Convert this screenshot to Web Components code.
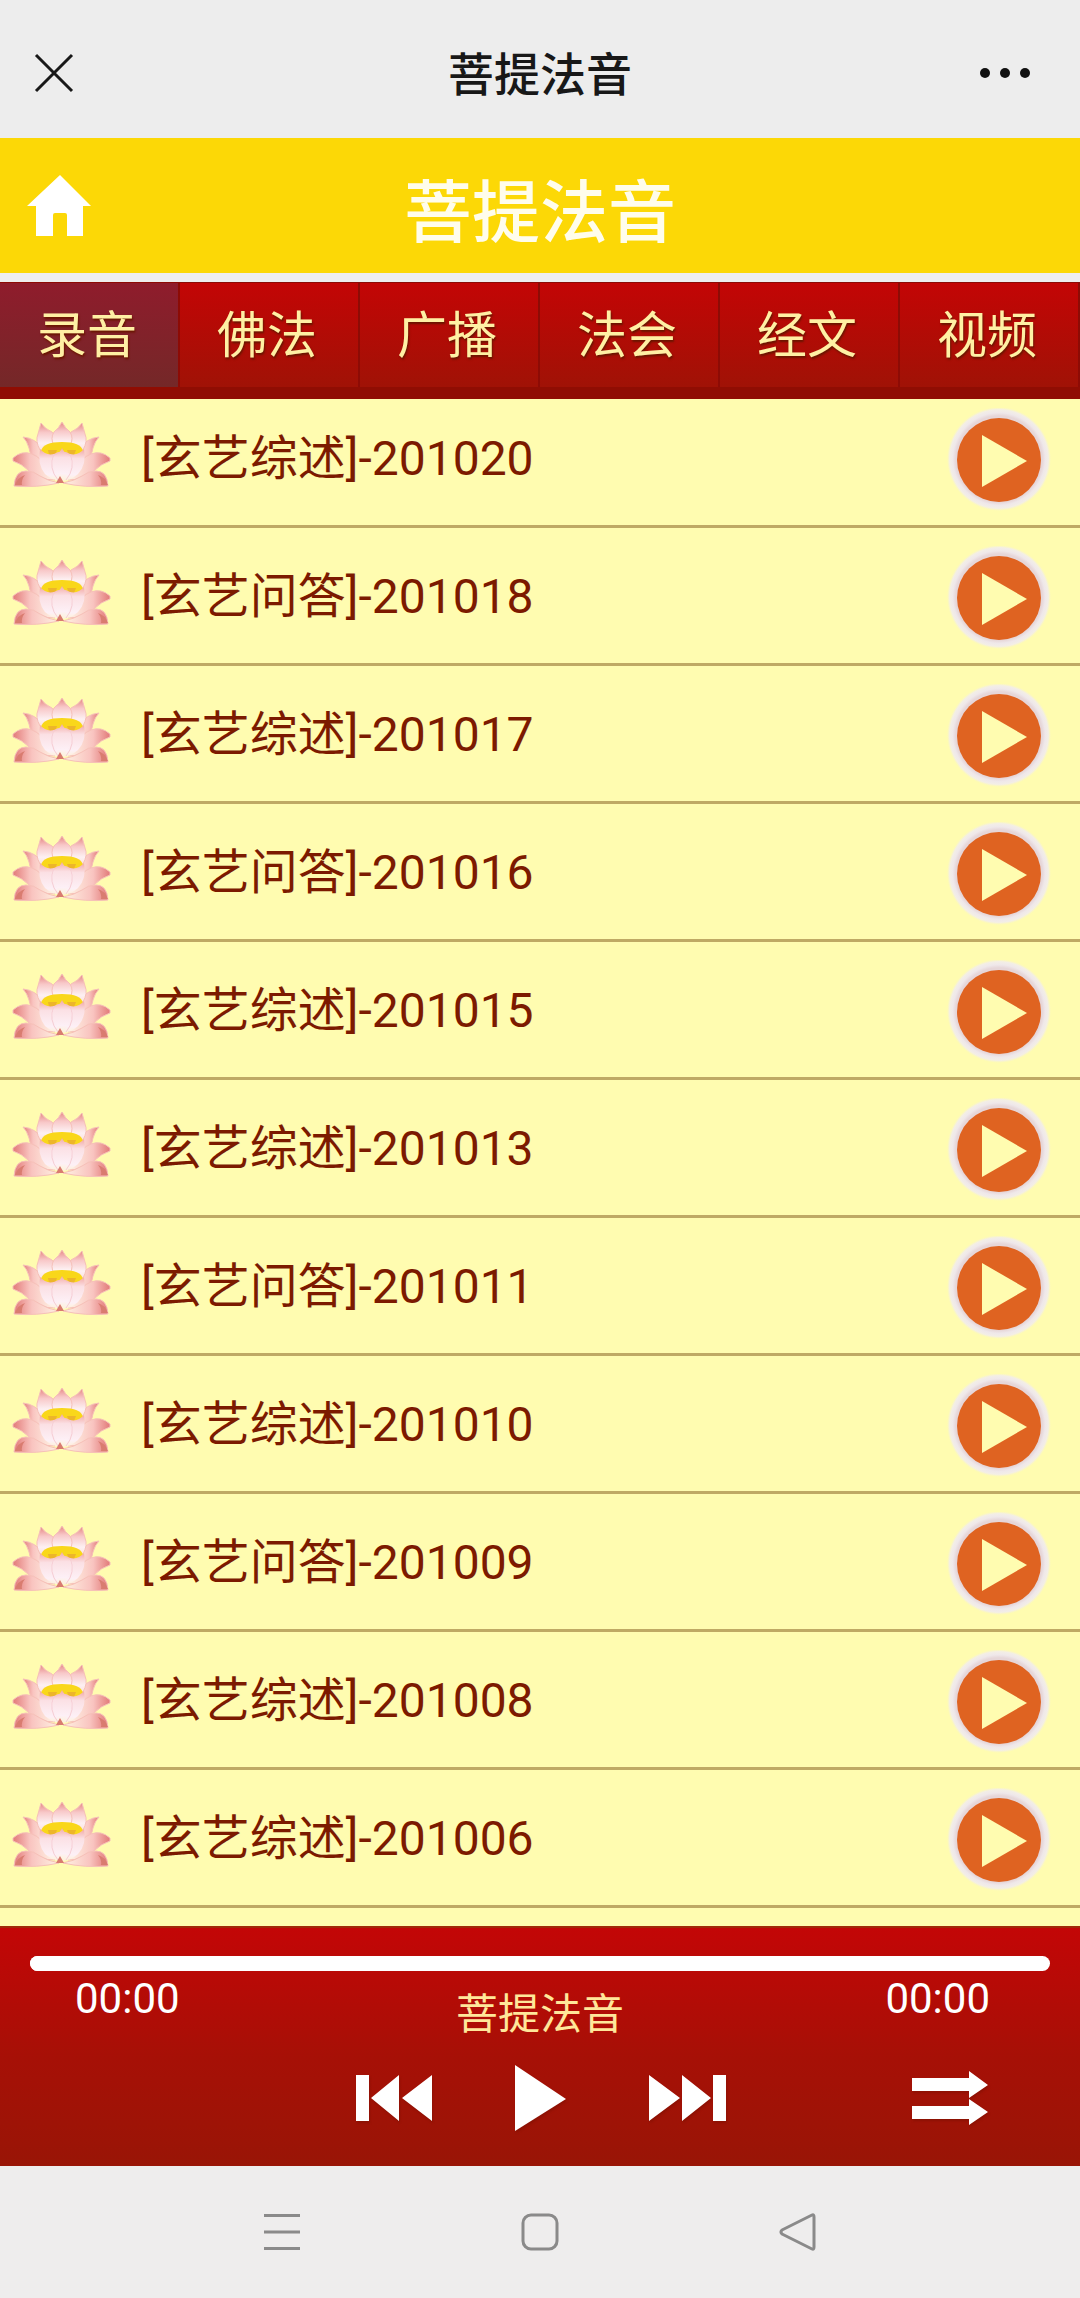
<!DOCTYPE html>
<html lang="zh-CN">
<head>
<meta charset="utf-8">
<meta name="viewport" content="width=device-width, initial-scale=1">
<title>菩提法音</title>
<style>
	body {
		margin: 0;
		background: #eee;
		font-family: Roboto, 'Noto Sans CJK SC', sans-serif;
	}
</style>
</head>
<body>
<audio-app></audio-app>

<script>
function makeTemplate(html) {
	const template = document.createElement('template');
	template.innerHTML = html;
	return template;
}

class BaseElement extends HTMLElement {
	constructor() {
		super();
		const shadow = this.attachShadow({ mode: 'open' });
		shadow.appendChild(this.constructor.template.content.cloneNode(true));
	}
}

const resetStyle = `
	* { box-sizing: border-box; }
	button {
		display: flex;
		align-items: center;
		justify-content: center;
		padding: 0;
		border: none;
		background: none;
		color: inherit;
		font: inherit;
		cursor: pointer;
	}
	svg { display: block; }
`;

class WindowBar extends BaseElement {
	static template = makeTemplate(`
<style>
	${resetStyle}
	:host {
		display: grid;
		grid-template-columns: 1fr auto 1fr;
		align-items: center;
		height: 138px;
		padding: 8px 33px 0;
		box-sizing: border-box;
		background: #ededed;
		color: #181818;
	}
	h1 {
		margin: 0;
		padding-top: 4px;
		font-size: 46px;
		line-height: 56px;
		font-weight: 500;
	}
	.more {
		justify-self: end;
		padding-right: 16px;
	}
	.close { justify-self: start; }
</style>
<button class="close" aria-label="关闭">
	<svg width="42" height="42" viewBox="0 0 42 42" fill="none" stroke="#181818" stroke-width="3"><path d="M3 3 39 39M39 3 3 39"/></svg>
</button>
<h1><slot></slot></h1>
<button class="more" aria-label="更多">
	<svg width="52" height="12" viewBox="0 0 52 12" fill="#111"><circle cx="6" cy="6" r="5"/><circle cx="26" cy="6" r="5"/><circle cx="46" cy="6" r="5"/></svg>
</button>
`);
}

class SiteHeader extends BaseElement {
	static template = makeTemplate(`
<style>
	${resetStyle}
	:host {
		display: grid;
		grid-template-columns: 1fr auto 1fr;
		align-items: center;
		height: 135px;
		padding: 0 27px;
		box-sizing: border-box;
		background: #fcd806;
		color: #fffdec;
	}
	a { justify-self: start; }
	h2 {
		margin: 0;
		padding-top: 16px;
		font-size: 68px;
		line-height: 76px;
		font-weight: 500;
	}
</style>
<a href="#home" aria-label="首页">
	<svg width="64" height="61" viewBox="0 0 64 61" fill="#fff"><path d="M33 0 64 31H56V61H40V40Q40 38 38 38H28Q26 38 26 40V61H9V31H0Z"/></svg>
</a>
<h2><slot></slot></h2>
`);
}

class TabItem extends BaseElement {
	static template = makeTemplate(`
<style>
	:host {
		display: flex;
		flex: 1;
		border-right: 2px solid #8d0b05;
	}
	:host([active]) {
		background: linear-gradient(#8f1c2c, #742828);
	}
	a {
		flex: 1;
		padding: 2px 4px 0 0;
		text-align: center;
		color: #fff0a4;
		font-size: 50px;
		line-height: 102px;
		text-decoration: none;
		text-shadow: 1px 2px 2px #6b1600;
	}
</style>
<a href="#"><slot></slot></a>
`);
	connectedCallback() {
		const link = this.shadowRoot.querySelector('a');
		link.href = `#${this.getAttribute('name')}`;
		if (this.hasAttribute('active')) link.setAttribute('aria-current', 'page');
	}
}

class TabBar extends BaseElement {
	static template = makeTemplate(`
<style>
	:host { display: block; }
	nav {
		display: flex;
		background: linear-gradient(#c30505, #a01206);
		border-top: 1px solid #8d0b05;
		border-bottom: 12px solid #900d03;
	}
</style>
<nav><slot></slot></nav>
`);
}

class LotusIcon extends BaseElement {
	static template = makeTemplate(`
<style>
	:host { display: block; }
	svg { display: block; }
</style>
<svg width="99" height="66" viewBox="0 0 99 66" stroke="#f6c0b8" stroke-width="1" stroke-linejoin="round" aria-hidden="true">
	<defs>
		<linearGradient id="top" x1="0" y1="0" x2="0" y2="1">
			<stop offset="0" stop-color="#e58684"/><stop offset=".3" stop-color="#f8c8c8"/><stop offset=".65" stop-color="#fdf0f2"/><stop offset="1" stop-color="#fbdcd6"/>
		</linearGradient>
		<linearGradient id="front" x1="0" y1="0" x2="0" y2="1">
			<stop offset="0" stop-color="#f2a9a4"/><stop offset=".3" stop-color="#fbe0e4"/><stop offset=".8" stop-color="#fdf0f6"/><stop offset="1" stop-color="#fdf3d8"/>
		</linearGradient>
		<linearGradient id="left" x1="0" y1="0" x2="1" y2="0">
			<stop offset="0" stop-color="#e27a78"/><stop offset=".4" stop-color="#f9c4c0"/><stop offset="1" stop-color="#fff3e4"/>
		</linearGradient>
		<linearGradient id="right" x1="1" y1="0" x2="0" y2="0">
			<stop offset="0" stop-color="#e27a78"/><stop offset=".4" stop-color="#f9c4c0"/><stop offset="1" stop-color="#fff3e4"/>
		</linearGradient>
	</defs>
	<path fill="url(#left)" d="M11 15Q24 16 31 28L36 46Q18 38 17 26 15 19 11 15Z"/>
	<path fill="url(#right)" d="M87 15Q74 16 67 28L62 46Q80 38 81 26 83 19 87 15Z"/>
	<path fill="url(#top)" d="M29 1Q33 7 40 10L47 19 43 32 28 28Q23 19 26 12Z"/>
	<path fill="url(#top)" d="M70 1Q66 7 59 10L52 19 56 32 71 28Q76 19 73 12Z"/>
	<path fill="url(#top)" d="M50 0Q53 6 58 10 62 16 58 24L50 30 42 24Q38 16 42 10 47 6 50 0Z"/>
	<path fill="url(#left)" d="M1 36Q10 28 20 32 30 36 34 46L43 58Q26 58 16 48 10 42 1 39Z"/>
	<path fill="url(#right)" d="M98 36Q89 28 79 32 69 36 65 46L56 58Q73 58 83 48 89 42 98 39Z"/>
	<path fill="#f9d71a" stroke="none" d="M29 29Q31 20 50 20 69 20 71 29L66 36H34Z"/>
	<path fill="#edb52a" stroke="none" d="M36 28H45L43 33H37ZM55 28H64L62 33H57Z"/>
	<path fill="url(#front)" stroke="none" d="M28 27Q34 34 42 32L46 30H54L58 32Q66 34 72 27 75 42 66 52 58 59 50 59 41 59 33 52 25 42 28 27Z"/>
	<path fill="none" stroke="#f6cdd4" d="M42 32Q36 46 46 58M58 32Q64 46 54 58"/>
	<path fill="url(#front)" stroke="none" d="M50 26Q52 31 58 34 63 45 50 58 37 45 42 34 48 31 50 26Z"/>
	<path fill="url(#left)" d="M2 64Q3 49 14 49 22 49 28 54 36 59 47 61 25 66 2 64Z"/>
	<path fill="url(#right)" d="M96 64Q95 49 84 49 76 49 70 54 62 59 51 61 73 66 96 64Z"/>
	<path fill="#d97c70" stroke="none" d="M48 54 52 61H44ZM3 63Q6 55 13 53 9 58 10 63ZM96 63Q93 55 86 53 90 58 89 63Z"/>
</svg>
`);
}

class TrackItem extends BaseElement {
	static template = makeTemplate(`
<style>
	${resetStyle}
	:host {
		display: flex;
		align-items: center;
		height: 138px;
		padding: 0 29px 0 12px;
		box-sizing: border-box;
		border-bottom: 3px solid #bfa964;
		color: #7c1a00;
	}
	lotus-icon { padding-bottom: 6px; }
	.title {
		flex: 1;
		margin-left: 30px;
		padding-top: 2px;
		font-size: 48px;
		line-height: 60px;
	}
	button { padding-top: 4px; }
</style>
<lotus-icon></lotus-icon>
<span class="title"><slot></slot></span>
<button aria-label="播放">
	<svg width="104" height="104" viewBox="0 0 104 104">
		<defs>
			<radialGradient id="ring">
				<stop offset=".83" stop-color="#e6d6d8"/><stop offset=".89" stop-color="#efe8ea"/><stop offset=".95" stop-color="#f3eee6"/><stop offset="1" stop-color="#f8f3d0" stop-opacity="0"/>
			</radialGradient>
		</defs>
		<circle cx="52" cy="51" r="52" fill="url(#ring)"/>
		<circle cx="52" cy="52" r="42" fill="#df6321"/>
		<path d="M35 27 80 53 35 79Z" fill="#fffcb0"/>
	</svg>
</button>
`);
}

class TrackList extends BaseElement {
	static template = makeTemplate(`
<style>
	:host {
		display: block;
		background: #fffcb0;
	}
</style>
<slot></slot>
`);
}

class PlayerBar extends BaseElement {
	static template = makeTemplate(`
<style>
	${resetStyle}
	:host {
		display: flex;
		flex-direction: column;
		height: 240px;
		padding: 28px 30px 0;
		box-sizing: border-box;
		border-top: 2px solid #a02a08;
		background: linear-gradient(#c30606, #a61006 55%, #991506);
		color: #fff;
	}
	input {
		appearance: none;
		width: 100%;
		height: 15px;
		margin: 0;
		border-radius: 8px;
		background: #fff;
	}
	input::-webkit-slider-thumb {
		appearance: none;
		width: 15px;
		height: 15px;
		border-radius: 8px;
		background: #fff;
	}
	.info {
		display: grid;
		grid-template-columns: 1fr auto 1fr;
		align-items: start;
		padding: 3px 60px 0 45px;
	}
	.info {
		padding-left: 60px;
	}
	.info time {
		font-size: 42px;
		line-height: 50px;
	}
	.info time:first-child {
		margin-left: -15px;
	}
	.info time:last-child {
		justify-self: end;
	}
	.info span {
		padding-top: 13px;
		color: #ffe79a;
		font-size: 42px;
		line-height: 56px;
	}
	.controls {
		display: grid;
		grid-template-columns: 1fr auto 1fr;
		align-items: center;
		padding: 22px 62px 0;
	}
	.main {
		grid-column: 2;
		display: flex;
		align-items: center;
		gap: 83px;
		padding-left: 2px;
	}
	.mode { justify-self: end; }
	svg { filter: drop-shadow(1px 2px 1px #70100066); }
</style>
<input type="range" min="0" max="100" value="0" aria-label="播放进度">
<div class="info">
	<time>00:00</time>
	<span><slot></slot></span>
	<time>00:00</time>
</div>
<div class="controls">
	<div class="main">
		<button aria-label="上一首">
			<svg width="76" height="46" viewBox="0 0 76 46" fill="#fff"><path d="M0 0H13V46H0ZM43 0V46L15 23ZM76 0V46L46 23Z"/></svg>
		</button>
		<button aria-label="播放">
			<svg width="51" height="66" viewBox="0 0 51 66" fill="#fff"><path d="M0 0 51 34 0 66Z"/></svg>
		</button>
		<button aria-label="下一首">
			<svg width="77" height="46" viewBox="0 0 77 46" fill="#fff"><path d="M64 0H77V46H64ZM0 0 31 23 0 46ZM33 0 62 23 33 46Z"/></svg>
		</button>
	</div>
	<button class="mode" aria-label="顺序播放">
		<svg width="76" height="54" viewBox="0 0 76 54" fill="#fff"><path d="M0 7H57V0L76 14 57 27V20H0ZM0 35H57V28L76 41 57 54V48H0Z"/></svg>
	</button>
</div>
`);
}

class SystemNav extends BaseElement {
	static template = makeTemplate(`
<style>
	${resetStyle}
	:host {
		display: flex;
		align-items: center;
		justify-content: center;
		gap: 218px;
		height: 132px;
		background: #eeeded;
	}
</style>
<button aria-label="菜单">
	<svg width="40" height="40" viewBox="0 0 40 40" fill="none" stroke="#8a8a8a" stroke-width="3"><path d="M2 3.5H38M2 20H38M2 36.5H38"/></svg>
</button>
<button aria-label="主屏幕">
	<svg width="40" height="40" viewBox="0 0 40 40" fill="none" stroke="#8a8a8a" stroke-width="3"><rect x="3" y="3" width="34" height="34" rx="8"/></svg>
</button>
<button aria-label="返回">
	<svg width="40" height="40" viewBox="0 0 40 40" fill="none" stroke="#8a8a8a" stroke-width="3" stroke-linejoin="round"><path d="M34 3Q36 2 36 5V35Q36 38 34 37L4 22Q2 20 4 18Z"/></svg>
</button>
`);
}

const tabs = [
	['record', '录音'],
	['dharma', '佛法'],
	['radio', '广播'],
	['assembly', '法会'],
	['scripture', '经文'],
	['video', '视频']
];

const tracks = [
	'[玄艺综述]-201020',
	'[玄艺问答]-201018',
	'[玄艺综述]-201017',
	'[玄艺问答]-201016',
	'[玄艺综述]-201015',
	'[玄艺综述]-201013',
	'[玄艺问答]-201011',
	'[玄艺综述]-201010',
	'[玄艺问答]-201009',
	'[玄艺综述]-201008',
	'[玄艺综述]-201006'
];

class AudioApp extends BaseElement {
	static template = makeTemplate(`
<style>
	:host {
		display: flex;
		flex-direction: column;
		min-height: 100vh;
	}
	/* the first row is tucked a little way under the tabs */
	tab-bar {
		position: relative;
		z-index: 1;
		margin: 9px 0 -9px;
	}
	track-list {
		flex: 1;
		padding-bottom: 18px;
	}
</style>
<window-bar>菩提法音</window-bar>
<site-header>菩提法音</site-header>
<tab-bar></tab-bar>
<track-list></track-list>
<player-bar>菩提法音</player-bar>
<system-nav></system-nav>
`);
	connectedCallback() {
		const tabBar = this.shadowRoot.querySelector('tab-bar');
		const list = this.shadowRoot.querySelector('track-list');
		tabs.forEach(([name, label], i) => {
			const tab = document.createElement('tab-item');
			tab.setAttribute('name', name);
			tab.textContent = label;
			if (i === 0) tab.setAttribute('active', '');
			tabBar.appendChild(tab);
		});
		tracks.forEach(title => {
			const item = document.createElement('track-item');
			item.textContent = title;
			list.appendChild(item);
		});
	}
}

customElements.define('window-bar', WindowBar);
customElements.define('site-header', SiteHeader);
customElements.define('tab-item', TabItem);
customElements.define('tab-bar', TabBar);
customElements.define('lotus-icon', LotusIcon);
customElements.define('track-item', TrackItem);
customElements.define('track-list', TrackList);
customElements.define('player-bar', PlayerBar);
customElements.define('system-nav', SystemNav);
customElements.define('audio-app', AudioApp);
</script>
</body>
</html>
